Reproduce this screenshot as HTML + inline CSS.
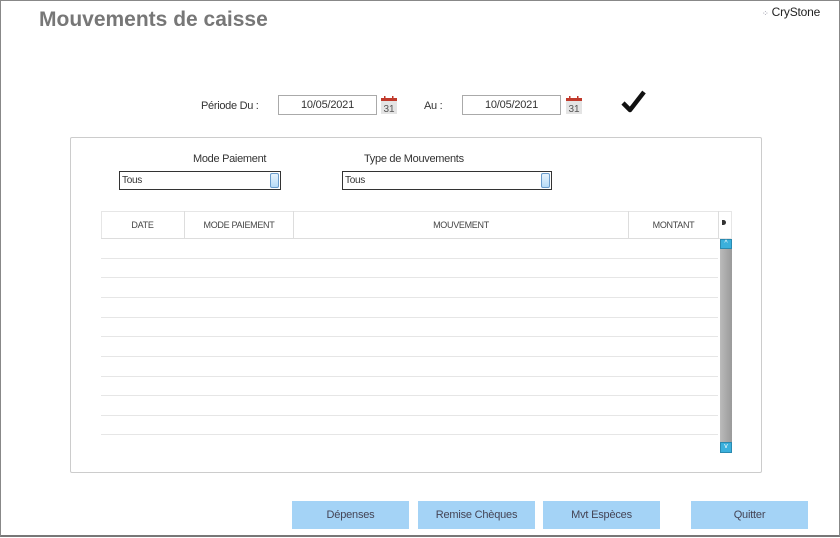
<!DOCTYPE html>
<html><head><meta charset="utf-8"><style>
*{margin:0;padding:0;box-sizing:border-box}
body{width:840px;height:538px;background:#fff;position:relative;overflow:hidden;font-family:"Liberation Sans",sans-serif;color:#333}
.a{position:absolute}
.frame{left:0;top:0;width:840px;height:537px;border:1px solid #888;border-bottom:2px solid #777}
h1{position:absolute;left:39px;top:8px;font-size:21px;font-weight:bold;color:#777;font-family:"Liberation Sans",sans-serif;letter-spacing:0px}
.inp{border:1px solid #aaa;height:20px;font-size:11px;text-align:center;line-height:18px;background:#fff;letter-spacing:-0.2px}
.lbl{font-size:11px;letter-spacing:-0.3px}
.btn{background:#a4d3f6;height:28px;top:501px;width:117px;font-size:11px;text-align:center;line-height:28px;color:#445;letter-spacing:-0.2px}
.sel{border:1px solid #333;height:19px;font-size:10px;line-height:17px;padding-left:2px;letter-spacing:-0.3px}
.sel i{position:absolute;right:1px;top:1px;width:9px;height:15px;border:1px solid #6a9ccc;border-radius:2px;background:linear-gradient(#e6f3fd,#b7dbf7)}
.th{top:211px;height:28px;font-size:9px;line-height:28px;text-align:center;border-right:1px solid #ddd;color:#444;letter-spacing:-0.3px}
.row{left:101px;width:617px;height:1px;background:#e6e6e6}
</style></head><body>
<div class="a frame"></div>
<h1>Mouvements de caisse</h1>
<div class="a" style="left:762px;top:5px;font-size:12px;color:#222;font-family:'Liberation Sans',sans-serif;letter-spacing:-0.2px"><span style="font-size:8px;color:#889">⁘</span> CryStone</div>

<div class="a lbl" style="left:201px;top:100px">Période Du :</div>
<div class="a inp" style="left:278px;top:95px;width:99px">10/05/2021</div>
<svg class="a" style="left:380px;top:96px" width="18" height="19"><rect x="1" y="2" width="16" height="16" fill="#e4e4e4"/><rect x="1" y="2" width="16" height="3" fill="#c0392b"/><rect x="4" y="0" width="1.5" height="3" fill="#c0392b"/><rect x="12" y="0" width="1.5" height="3" fill="#c0392b"/><text x="9" y="16" font-size="10" text-anchor="middle" fill="#555" font-family="Liberation Sans,sans-serif">31</text></svg>
<div class="a lbl" style="left:424px;top:100px">Au :</div>
<div class="a inp" style="left:462px;top:95px;width:99px">10/05/2021</div>
<svg class="a" style="left:565px;top:96px" width="18" height="19"><rect x="1" y="2" width="16" height="16" fill="#e4e4e4"/><rect x="1" y="2" width="16" height="3" fill="#c0392b"/><rect x="4" y="0" width="1.5" height="3" fill="#c0392b"/><rect x="12" y="0" width="1.5" height="3" fill="#c0392b"/><text x="9" y="16" font-size="10" text-anchor="middle" fill="#555" font-family="Liberation Sans,sans-serif">31</text></svg>
<svg class="a" style="left:621px;top:90px" width="26" height="24"><path d="M2 13 L9 20 L23 2" stroke="#111" stroke-width="4.5" fill="none" stroke-linejoin="round"/></svg>

<div class="a" style="left:70px;top:137px;width:692px;height:336px;border:1px solid #ccc;border-radius:2px"></div>
<div class="a lbl" style="left:193px;top:153px">Mode Paiement</div>
<div class="a lbl" style="left:364px;top:153px">Type de Mouvements</div>
<div class="a sel" style="left:119px;top:171px;width:162px">Tous<i></i></div>
<div class="a sel" style="left:342px;top:171px;width:210px">Tous<i></i></div>

<div class="a" style="left:101px;top:211px;width:631px;height:28px;border:1px solid #e6e6e6"></div>
<div class="a th" style="left:101px;width:84px">DATE</div>
<div class="a th" style="left:185px;width:109px">MODE PAIEMENT</div>
<div class="a th" style="left:294px;width:335px">MOUVEMENT</div>
<div class="a th" style="left:629px;width:90px">MONTANT</div>
<div class="a" style="left:722px;top:220px;width:4px;height:5px;background:#333;border-radius:0 3px 3px 0"></div>
<div class="a row" style="top:238px;background:#ddd"></div>
<div class="a row" style="top:258px"></div><div class="a row" style="top:277px"></div>
<div class="a row" style="top:297px"></div><div class="a row" style="top:317px"></div>
<div class="a row" style="top:336px"></div><div class="a row" style="top:356px"></div>
<div class="a row" style="top:376px"></div><div class="a row" style="top:395px"></div>
<div class="a row" style="top:415px"></div><div class="a row" style="top:434px"></div>
<div class="a" style="left:720px;top:239px;width:12px;height:214px;background:linear-gradient(90deg,#bbb,#9a9a9a)"></div>
<div class="a" style="left:720px;top:239px;width:12px;height:10px;background:#3bb0dc;border:1px solid #2a8ab0;color:#fff;font-size:7px;line-height:8px;text-align:center">^</div>
<div class="a" style="left:720px;top:442px;width:12px;height:11px;background:#3bb0dc;border:1px solid #2a8ab0;color:#fff;font-size:7px;line-height:8px;text-align:center">v</div>

<div class="a btn" style="left:292px">Dépenses</div>
<div class="a btn" style="left:418px">Remise Chèques</div>
<div class="a btn" style="left:543px">Mvt Espèces</div>
<div class="a btn" style="left:691px">Quitter</div>
</body></html>
